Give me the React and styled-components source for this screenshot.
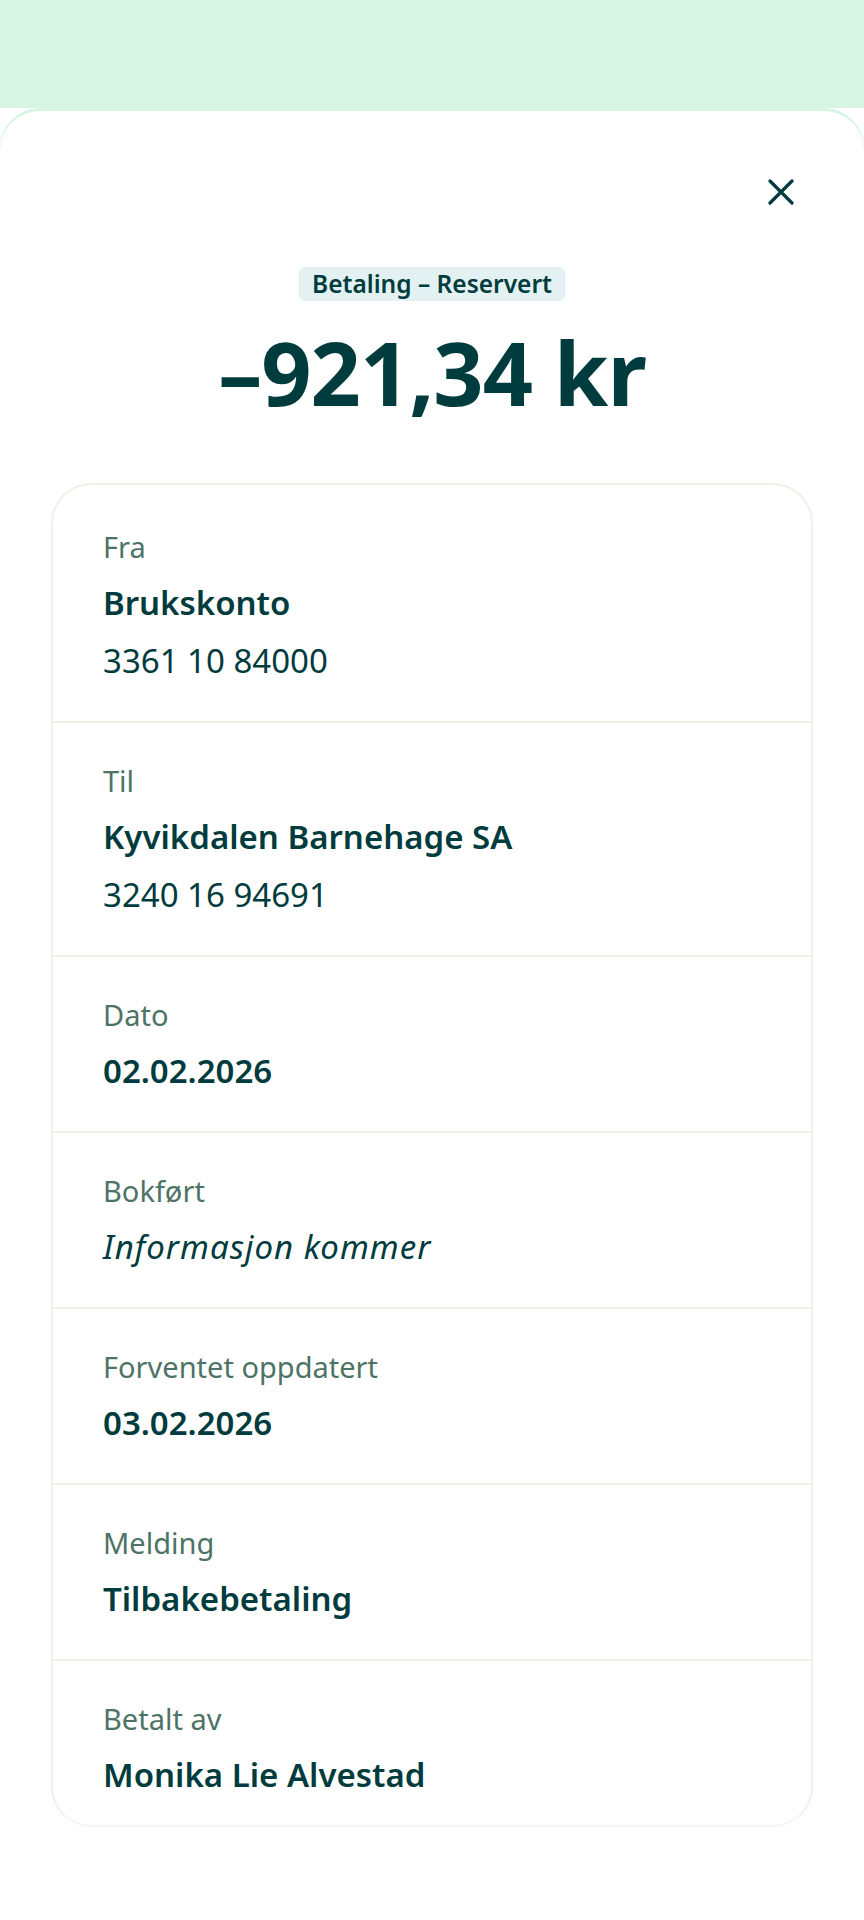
import React from "react";
import styled, { createGlobalStyle } from "styled-components";

const GlobalStyle = createGlobalStyle`
  body {
    margin: 0;
    background: #ffffff;
    font-family: "Noto Sans", "Open Sans", sans-serif;
    color: #003b3d;
  }
`;

const Page = styled.div`
  width: 864px;
  min-height: 1920px;
  background: #ffffff;
  overflow: hidden;
`;

const Band = styled.div`
  height: 108px;
  background: #d7f5e2;
`;

const Sheet = styled.main`
  margin-top: 3px;
  background: #ffffff;
  border-radius: 40px 40px 0 0;
  box-shadow: 0 -3px 0 0 #d7f5e2;
  padding: 0 51px 80px;
`;

const TopBar = styled.div`
  display: flex;
  justify-content: flex-end;
  padding-top: 59px;
  padding-right: 10px;
`;

const CloseButton = styled.button`
  width: 44px;
  height: 44px;
  display: flex;
  align-items: center;
  justify-content: center;
  border: none;
  background: none;
  padding: 0;
  color: #003b3d;
`;

const Head = styled.div`
  display: flex;
  flex-direction: column;
  align-items: center;
  padding-top: 53px;
`;

const Badge = styled.span`
  display: inline-block;
  background: #e3f1f2;
  border-radius: 6px;
  padding: 0 13px;
  height: 34px;
  line-height: 34px;
  font-size: 24.5px;
  font-weight: 600;
  color: #003b3d;
`;

const Amount = styled.h1`
  margin: 21px 0 0;
  font-size: 88px;
  line-height: 101px;
  font-weight: 700;
  letter-spacing: -1px;
  color: #003b3d;
`;

const Card = styled.section`
  margin-top: 60px;
  border: 2px solid #f3efe7;
  border-bottom-color: #f8f6f1;
  border-radius: 40px;
  overflow: hidden;
`;

const Row = styled.div`
  padding: 38px 52px 38px 50px;
  border-top: 2px solid #f3efe7;

  &:first-child {
    border-top: none;
    padding-top: 42px;
  }

  &:last-child {
    padding-bottom: 28px;
  }
`;

const Label = styled.div`
  font-size: 29px;
  line-height: 40px;
  color: #4d7366;
`;

const Value = styled.div`
  margin-top: 14px;
  font-size: 33px;
  line-height: 44px;
  font-weight: ${(p) => (p.$italic ? 400 : 600)};
  font-style: ${(p) => (p.$italic ? "italic" : "normal")};
  letter-spacing: ${(p) => (p.$italic ? "1px" : "0")};
  color: #003b3d;
`;

const Account = styled.div`
  margin-top: 14px;
  font-size: 33px;
  line-height: 44px;
  color: #003b3d;
`;

const CloseIcon = () => (
  <svg width="26" height="26" viewBox="0 0 26 26" fill="none">
    <path
      d="M2 2L24 24M24 2L2 24"
      stroke="currentColor"
      strokeWidth="3.2"
      strokeLinecap="round"
    />
  </svg>
);

const rows = [
  { label: "Fra", value: "Brukskonto", account: "3361 10 84000" },
  { label: "Til", value: "Kyvikdalen Barnehage SA", account: "3240 16 94691" },
  { label: "Dato", value: "02.02.2026" },
  { label: "Bokført", value: "Informasjon kommer", italic: true },
  { label: "Forventet oppdatert", value: "03.02.2026" },
  { label: "Melding", value: "Tilbakebetaling" },
  { label: "Betalt av", value: "Monika Lie Alvestad" },
];

export default function App() {
  return (
    <Page>
      <GlobalStyle />
      <Band />
      <Sheet>
        <TopBar>
          <CloseButton aria-label="Lukk">
            <CloseIcon />
          </CloseButton>
        </TopBar>
        <Head>
          <Badge>Betaling – Reservert</Badge>
          <Amount>–921,34 kr</Amount>
        </Head>
        <Card>
          {rows.map((r) => (
            <Row key={r.label}>
              <Label>{r.label}</Label>
              <Value $italic={r.italic}>{r.value}</Value>
              {r.account && <Account>{r.account}</Account>}
            </Row>
          ))}
        </Card>
      </Sheet>
    </Page>
  );
}
